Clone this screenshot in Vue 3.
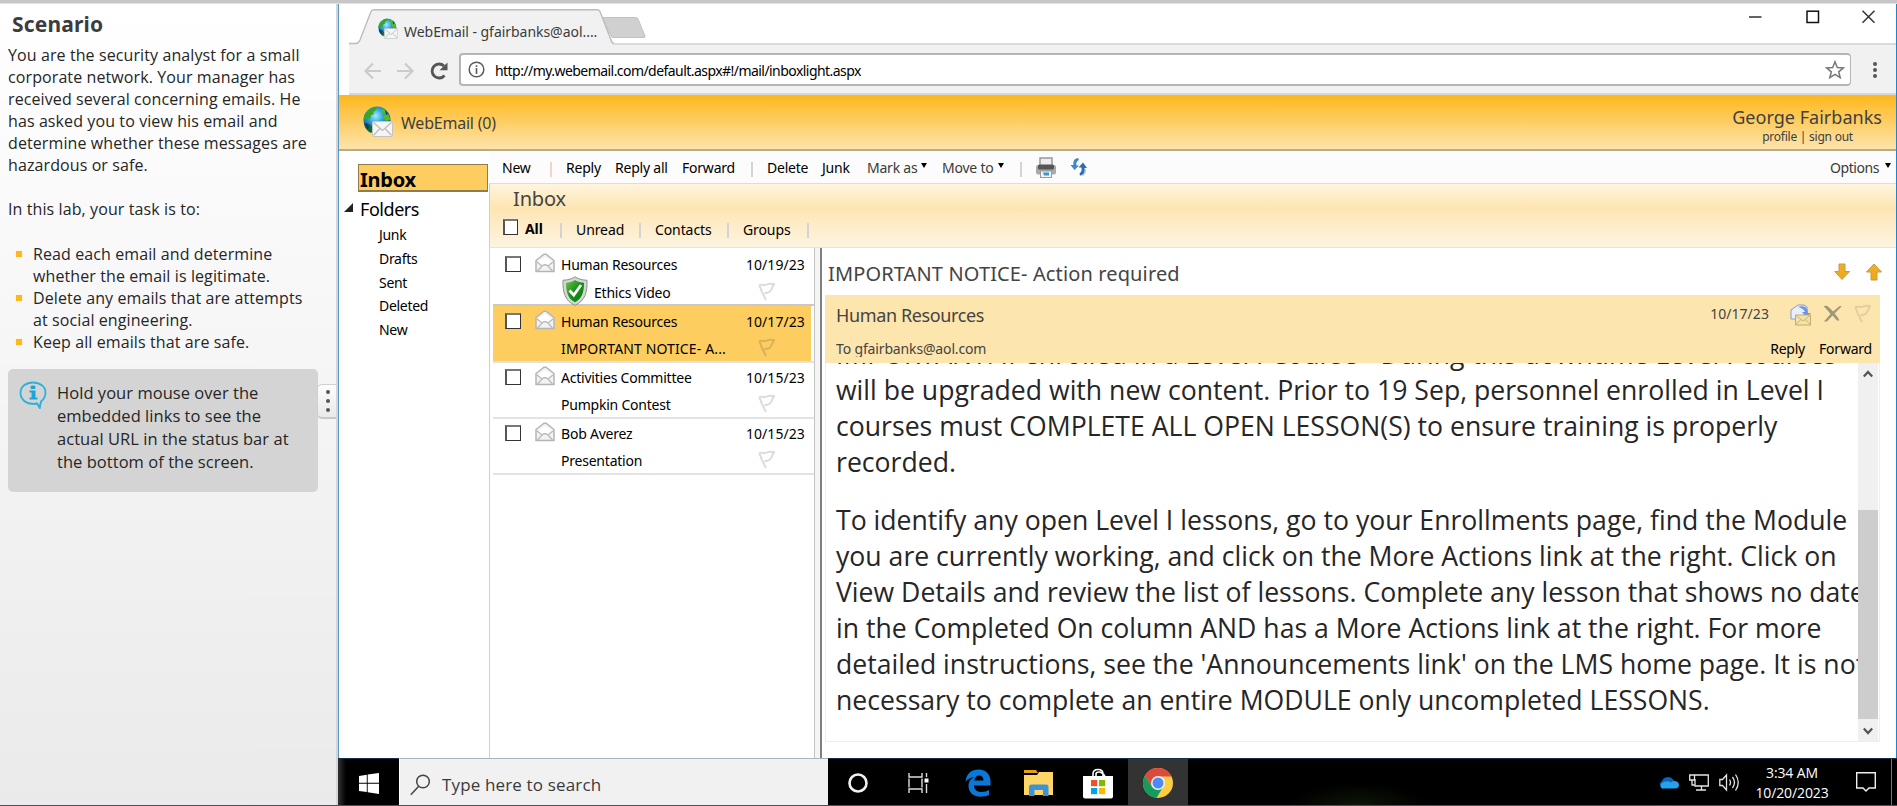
<script setup>
const intro = [
  'You are the security analyst for a small',
  'corporate network. Your manager has',
  'received several concerning emails. He',
  'has asked you to view his email and',
  'determine whether these messages are',
  'hazardous or safe.',
]
const tasks = [
  ['Read each email and determine', 'whether the email is legitimate.'],
  ['Delete any emails that are attempts', 'at social engineering.'],
  ['Keep all emails that are safe.'],
]
const hint = ['Hold your mouse over the', 'embedded links to see the', 'actual URL in the status bar at', 'the bottom of the screen.']
const folders = ['Junk', 'Drafts', 'Sent', 'Deleted', 'New']
const emails = [
  { from: 'Human Resources', subject: 'Ethics Video', date: '10/19/23', safe: true },
  { from: 'Human Resources', subject: 'IMPORTANT NOTICE- A...', date: '10/17/23', selected: true },
  { from: 'Activities Committee', subject: 'Pumpkin Contest', date: '10/15/23' },
  { from: 'Bob Averez', subject: 'Presentation', date: '10/15/23' },
]
const paragraphs = [
  [
    'IMPORTANT: If enrolled in a Level I Course - During this downtime Level I courses',
    'will be upgraded with new content. Prior to 19 Sep, personnel enrolled in Level I',
    'courses must COMPLETE ALL OPEN LESSON(S) to ensure training is properly',
    'recorded.',
  ],
  [
    'To identify any open Level I lessons, go to your Enrollments page, find the Module',
    'you are currently working, and click on the More Actions link at the right. Click on',
    'View Details and review the list of lessons. Complete any lesson that shows no date',
    'in the Completed On column AND has a More Actions link at the right. For more',
    "detailed instructions, see the 'Announcements link' on the LMS home page. It is not",
    'necessary to complete an entire MODULE only uncompleted LESSONS.',
  ],
]
</script>

<template>
  <div class="page">
    <svg class="defs" width="0" height="0">
      <defs>
        <radialGradient id="sea" cx=".45" cy=".35" r=".65">
          <stop offset="0" stop-color="#a5ecfb" /><stop offset=".45" stop-color="#2a9fdc" /><stop offset="1" stop-color="#0c3a86" />
        </radialGradient>
        <linearGradient id="gold" x1="0" y1="0" x2="0" y2="1">
          <stop offset="0" stop-color="#eeb030" /><stop offset="1" stop-color="#f0a814" />
        </linearGradient>
        <linearGradient id="shieldFill" x1="0" y1="0" x2="1" y2="1">
          <stop offset="0" stop-color="#6cc455" /><stop offset=".5" stop-color="#169016" /><stop offset="1" stop-color="#0a7a12" />
        </linearGradient>
        <symbol id="globe" viewBox="0 0 30 31">
          <circle cx="14" cy="14" r="13.5" fill="url(#sea)" />
          <path d="M5 5C9 1 12 1 14 1L13 4 10 6 11 8 8 9 7 13 4 12 1 15C0 11 2 8 5 5Z" fill="#3ca61e" />
          <path d="M1 17l5 1 4 4 -2 5C4 25 1 21 1 17Z" fill="#0c6b35" />
          <path d="M18 2c5 2 9 7 9 12l-4 1-3-4 2-3-4-2Z" fill="#55bd1f" />
          <path d="M2 17l3 1 1 4-2 1ZM22 4l3 4-2 1Z" fill="#16318f" />
          <rect x="9.500" y="15.500" width="20" height="15" rx="1" fill="#f5f5f5" stroke="#c4c4c4" />
          <path d="M10.500 16.500L19.500 24.500 28.500 16.500M10.500 29.500L17 22.500M28.500 29.500L22 22.500" fill="none" stroke="#bdbdbd" stroke-width="1.300" />
        </symbol>
        <symbol id="openmail" viewBox="0 0 20 20">
          <path d="M1 7.500L9 1.200h2L19 7.500V18.500H1Z" fill="#f3f3f3" stroke="#b5b5b5" stroke-width="1.500" />
          <path d="M4 8L10 4l6 4v4H4Z" fill="#fff" />
          <path d="M2 9l5 4M18 9l-5 4M2.500 18l5-5.500q2.500-1.500 5 0l5 5.500" fill="none" stroke="#b9b9b9" stroke-width="1.300" />
        </symbol>
        <symbol id="flag" viewBox="0 0 18 19">
          <path d="M1 3.500C4 1 6 4.500 9 2.500S14 3 16.500 1.500C14 5 14 7 12 9.500 10 11 9 10.500 6.500 11.500M1 3.500C3 5 3 9 5 12L8 18" fill="none" stroke="currentColor" stroke-width="2" />
        </symbol>
      </defs>
    </svg>

    <div class="topstrip"></div>
    <div class="main">
      <aside class="scenario">
        <h1>Scenario</h1>
        <p class="intro"><span v-for="l in intro" :key="l">{{ l }}</span></p>
        <p class="intro lab">In this lab, your task is to:</p>
        <ul>
          <li v-for="t in tasks" :key="t[0]"><span v-for="l in t" :key="l">{{ l }}</span></li>
        </ul>
        <div class="hint">
          <svg width="28" height="28" viewBox="0 0 28 28">
            <path d="M14 1.500C21 1.500 26.500 5.500 26.500 11.500 26.500 16.500 24 19 22 20.500L20.500 26.500 18 22.300C8 24.500 1.500 18.500 1.500 12 1.500 5.500 7 1.500 14 1.500Z" fill="none" stroke="#2fb1dc" stroke-width="1.800" />
            <path d="M4 19C8 23 14 23 18 22.500L21 27 22 21" fill="none" stroke="#2fb1dc" stroke-width="1.300" />
            <rect x="11.500" y="4.500" width="5" height="3.500" rx="1.500" fill="#1aa5d8" />
            <path d="M10.500 9.500h6v7h2v2h-8v-2h2v-5h-2Z" fill="#1aa5d8" />
          </svg>
          <div><span v-for="l in hint" :key="l">{{ l }}</span></div>
        </div>
        <div class="handle"><i></i><i></i><i></i></div>
      </aside>

      <div class="desktop">
        <div class="browser">
          <div class="titlebar">
            <svg class="tabshape" width="300" height="36" viewBox="0 0 300 36">
              <path d="M253 8.500h34q1.500 0 2 1.500l7 17q.5 1.500-1 1.500h-32z" fill="#d0d0d0" stroke="#c2c2c2" />
              <path d="M0 34.500H7C9 34.500 10 33 11 31L22 2.500Q23 .7 25 .7H248Q250 .7 251 2.500L262 31Q263 34.500 265 34.500V36H0Z" fill="#f1f1f1" />
              <path d="M0 34.500H7C9 34.500 10 33 11 31L22 2.500Q23 .7 25 .7H248Q250 .7 251 2.500L262 31Q263 34.500 265 34.500" fill="none" stroke="#bcbcbc" stroke-width="1.400" />
            </svg>
            <svg class="tabicon" width="20" height="21"><use href="#globe" /></svg>
            <span class="tabtext">WebEmail - gfairbanks@aol....</span>
            <svg class="winctl" width="126" height="14" viewBox="0 0 126 14">
              <path d="M0 7h12.500" stroke="#222" stroke-width="1.400" />
              <rect x="58" y="1.200" width="11.500" height="11.300" fill="none" stroke="#111" stroke-width="1.500" />
              <path d="M113.500 .7l12 12M125.500 .7l-12 12" stroke="#333" stroke-width="1.500" />
            </svg>
          </div>
          <div class="navbar">
            <svg class="nav" width="84" height="18" viewBox="0 0 84 18">
              <path d="M17 9H2M9 1.500L1.500 9l7.500 7.500M33 9H48M41 1.500L48.500 9l-7.500 7.500" fill="none" stroke="#cbcbcb" stroke-width="2.200" />
              <path d="M80.500 13.500A7 7 0 1 1 80 4" fill="none" stroke="#555" stroke-width="2.800" />
              <path d="M83.500 .6V8.200H75.500Z" fill="#555" />
            </svg>
            <div class="address">
              <svg width="17" height="17" viewBox="0 0 17 17"><circle cx="8.500" cy="8.500" r="7.300" fill="none" stroke="#5a5a5a" stroke-width="1.500" /><path d="M8.500 4.300v1.600M8.500 7v6" stroke="#5a5a5a" stroke-width="1.600" /></svg>
              <span class="url">http://my.webemail.com/default.aspx#!/mail/inboxlight.aspx</span>
              <svg class="star" width="20" height="20" viewBox="0 0 20 20"><path d="M10 1.800l2.300 5.700 6.100.4-4.700 3.900 1.500 5.900L10 14.400l-5.200 3.300 1.500-5.900L1.600 7.900l6.100-.4Z" fill="none" stroke="#777" stroke-width="1.500" /></svg>
            </div>
            <div class="kebab"><i></i><i></i><i></i></div>
          </div>

          <header class="mailhead">
            <svg width="30" height="31"><use href="#globe" /></svg>
            <span class="brand">WebEmail (0)</span>
            <div class="user"><b>George Fairbanks</b><small>profile | sign out</small></div>
          </header>

          <div class="mail">
            <nav class="side">
              <div class="sel">Inbox</div>
              <div class="folders"><svg width="9" height="9"><path d="M9 0V9H0Z" fill="#222" /></svg>Folders</div>
              <a v-for="f in folders" :key="f">{{ f }}</a>
            </nav>
            <section class="content">
              <div class="menu">
                <span>New</span><i class="pink"></i><span>Reply</span><span>Reply all</span><span>Forward</span><i></i><span>Delete</span><span>Junk</span>
                <span class="dd">Mark as<svg width="6" height="5"><path d="M0 0H6L3 5Z" /></svg></span>
                <span class="dd">Move to<svg width="6" height="5"><path d="M0 0H6L3 5Z" /></svg></span>
                <i></i>
                <svg width="22" height="22" viewBox="0 0 22 22">
                  <rect x="5" y="1" width="12" height="9" fill="#eee" stroke="#999" stroke-width="1.500" />
                  <rect x="1" y="8" width="20" height="9.500" rx="2" fill="#a9a9a9" />
                  <rect x="3" y="7.500" width="16" height="5" rx="1.500" fill="#555" />
                  <rect x="5.500" y="14" width="11" height="6.500" fill="#f4f4f4" stroke="#999" />
                  <path d="M8 15.500h6v3H9Z" fill="#2f9ad0" />
                </svg>
                <svg width="19" height="20" viewBox="0 0 19 20">
                  <path d="M8 1C3.500 2 3 5 3.500 8H.5l4 5L9 8.500H6.500C6 6 6.500 4 9 3Z" fill="#3f86cc" />
                  <path d="M10 18.500c4.500-.5 5-4 4.500-7.500H17L13 5.500 8.500 10.500H11.500c.5 3 0 4.500-2 6Z" fill="#2e6cb5" />
                  <path d="M15.500 12q1 4-3 7" fill="none" stroke="#bbb" />
                </svg>
                <em></em>
                <span class="dd">Options<svg width="6" height="5"><path d="M0 0H6L3 5Z" /></svg></span>
              </div>
              <div class="band">
                <h2>Inbox</h2>
                <div class="filters">
                  <i class="box"></i><b>All</b><u></u><span>Unread</span><u></u><span>Contacts</span><u></u><span>Groups</span><u></u>
                </div>
              </div>
              <div class="panes">
                <div class="list">
                  <div v-for="(m, n) in emails" :key="n" class="row" :class="{ selected: m.selected }">
                    <i class="box"></i>
                    <svg class="env" width="20" height="20"><use href="#openmail" /></svg>
                    <span class="from">{{ m.from }}</span><span class="date">{{ m.date }}</span>
                    <span class="subj" :class="{ wide: m.selected }">
                      <svg v-if="m.safe" class="shield" width="26" height="30" viewBox="0 0 26 30">
                        <path d="M13 .8C9 3.500 5 4.200 1 4.200 .5 16 3 25 13 29.300 23 25 25.500 16 25 4.200 21 4.200 17 3.500 13 .8Z" fill="#d4d7d4" stroke="#8d928d" />
                        <path d="M13 4C10 6 7 6.700 4 6.800 4 16.500 6 22.500 13 26.300 20 22.500 22 16.500 22 6.800 19 6.700 16 6 13 4Z" fill="url(#shieldFill)" />
                        <path d="M7.500 14.500l4.300 4.500L19 9" fill="none" stroke="#fff" stroke-width="2.800" />
                      </svg>{{ m.subject }}</span>
                    <svg class="flag" width="18" height="19"><use href="#flag" /></svg>
                  </div>
                </div>
                <div class="splitter"></div>
                <div class="reader">
                  <div class="subject">
                    <span>IMPORTANT NOTICE- Action required</span>
                    <svg width="48" height="18" viewBox="0 0 48 18">
                      <path d="M5 1h6v7.500h4.500L8 16.500.8 8.500H5Z" fill="url(#gold)" stroke="#c99a3c" />
                      <path d="M37 17h6V9h4.500L40 1 32.500 9H37Z" fill="url(#gold)" stroke="#c99a3c" />
                    </svg>
                  </div>
                  <div class="meta">
                    <div class="sender"><span>Human Resources</span><span class="to">To gfairbanks@aol.com</span></div>
                    <div class="right">
                      <div class="icons">
                        <span>10/17/23</span>
                        <svg class="fw" width="22" height="22" viewBox="0 0 22 22">
                          <path d="M1 6L8 1h6l3 2v12H1Z" fill="#e8eefb" stroke="#8c9cc0" />
                          <path d="M8 3c6-2 10 1 10 6h3l-5 4-4-5h3C14 5 11 4 8 3Z" fill="#6d93e6" />
                          <rect x="5.500" y="11" width="15" height="10" fill="#f3e4a6" stroke="#c2ac70" />
                          <path d="M6 11.500l7 5.500 7-5.500M6 20l5-4.500M20 20l-5-4.500" fill="none" stroke="#c9b478" />
                        </svg>
                        <svg class="del" width="19" height="17" viewBox="0 0 19 17"><path d="M.5 1L4 .8Q8 4 10 6.500L17 .8 18.500 1.500 11.500 8.500Q15 12 16.500 15.500H14L9.500 10.500 4 16.500H1L7.500 9Q4 4.500 .5 1Z" fill="#a0967a" /></svg>
                        <svg class="fl" width="18" height="19"><use href="#flag" /></svg>
                      </div>
                      <div class="acts"><span>Reply</span><span>Forward</span></div>
                    </div>
                  </div>
                  <div class="body">
                    <div class="text">
                      <p v-for="(p, n) in paragraphs" :key="n"><span v-for="l in p" :key="l">{{ l }}</span></p>
                    </div>
                    <div class="scroll">
                      <svg width="10" height="8" viewBox="0 0 10 8"><path d="M.8 6.500L5 2l4.200 4.500" fill="none" stroke="#555" stroke-width="2.300" /></svg>
                      <div class="thumb"></div>
                      <svg width="10" height="8" viewBox="0 0 10 8"><path d="M.8 1.500L5 6l4.200-4.500" fill="none" stroke="#555" stroke-width="2.300" /></svg>
                    </div>
                  </div>
                </div>
              </div>
            </section>
          </div>
        </div>

        <footer class="taskbar">
          <div class="start">
            <svg width="20" height="21" viewBox="0 0 20 21"><path d="M0 3L7.800 1.800V9.800H0ZM8.700 1.600L20 0V9.800H8.700ZM0 10.800H7.800V19L0 18ZM8.700 10.800H20V21L8.700 19.200Z" fill="#fff" /></svg>
          </div>
          <div class="search">
            <svg width="21" height="22" viewBox="0 0 21 22"><circle cx="13" cy="7.500" r="6.300" fill="none" stroke="#444" stroke-width="1.500" /><path d="M8.500 12.500L.8 20.800" stroke="#444" stroke-width="1.500" /></svg>
            <span>Type here to search</span>
          </div>
          <div class="apps">
            <div><svg width="20" height="20" viewBox="0 0 20 20"><circle cx="10" cy="10" r="8.500" fill="none" stroke="#eef2f5" stroke-width="2.600" /></svg></div>
            <div>
              <svg width="21" height="20" viewBox="0 0 21 20"><path d="M1 0V4H14V0M1 20V16H14V20M1 5.500V14.500M14 5.500V14.500M18.500 0V4M18.500 11V20" fill="none" stroke="#ddd" stroke-width="1.400" /><rect x="16.500" y="5.500" width="4" height="4" fill="#fff" /></svg>
            </div>
            <div>
              <svg width="26" height="28" viewBox="0 0 26 28"><path d="M.5 12.500C1.500 4 7 .5 13.500 .5 21.500 .5 25.500 6 25.500 13V16.500H9C9 21 12.500 23 16.500 23 19.500 23 22 22 24 21V26C21.500 27.300 18.500 27.700 15.500 27.700 7.500 27.700 3.500 22.500 3.500 17 3.500 12.500 6 9.500 9.500 8 6.500 8.500 2.500 10 .5 12.500ZM9.300 11.500H18.500C18.500 8.500 17 6.500 14 6.500 11.500 6.500 9.800 8.500 9.300 11.500Z" fill="#0a78d7" fill-rule="evenodd" /></svg>
            </div>
            <div>
              <svg width="29" height="26" viewBox="0 0 29 26"><path d="M0 0H12L14 3H0Z" fill="#e5a00a" /><path d="M0 5H13L15 2H29V25H0Z" fill="#fdd665" /><path d="M5 26V17Q5 14.500 7.500 14.500H22Q24.500 14.500 24.500 17V26H19V20H10.500V26Z" fill="#3c94d8" /></svg>
            </div>
            <div>
              <svg width="30" height="31" viewBox="0 0 30 31"><path d="M10 9V6Q10 1.500 15 1.500T20 6V9M13 8V6Q13 4 16 4T22 8" fill="none" stroke="#fff" stroke-width="1.600" /><path d="M0 8H30V28.500Q30 30.500 28 30.500H2Q0 30.500 0 28.500Z" fill="#fff" /><path d="M8 12h6.200v6.200H8Z" fill="#f05223" /><path d="M16 12h6.200v6.200H16Z" fill="#7fba00" /><path d="M8 20h6.200v6.200H8Z" fill="#00a3ee" /><path d="M16 20h6.200v6.200H16Z" fill="#ffb800" /></svg>
            </div>
            <div class="active">
              <svg width="30" height="30" viewBox="0 0 30 30"><circle cx="15" cy="15" r="15" fill="#fdcd45" /><path d="M15 15L9 18.500 2 7.500A15 15 0 0 0 13.500 30L20 19Z" fill="#159c5a" /><path d="M15 8.500H28.500A15 15 0 0 0 2 7.500L9 18.500 15 15Z" fill="#dc4a3d" /><circle cx="15" cy="15" r="7" fill="#f3f3f3" /><circle cx="15" cy="15" r="5.500" fill="#4c8bf5" /></svg>
            </div>
          </div>
          <div class="tray">
            <svg width="20" height="13" viewBox="0 0 20 13"><path d="M4 12.500A4 4 0 0 1 3 5 6 5 0 0 1 14 3.500L18 8Z" fill="#0a64b8" /><path d="M3 12.500A3.500 3.500 0 0 1 4 6.500Q8 4 12 6.500A4.500 4 0 0 1 20 9 3.500 3.500 0 0 1 17 12.500Z" fill="#25a2ea" /></svg>
            <svg width="20" height="17" viewBox="0 0 20 17"><path d="M6 1H19.300V12H6V5M12.500 12V15.500M7 16H17" fill="none" stroke="#e4e4e4" stroke-width="1.300" /><path d="M.7 1H5.500V6H.7ZM3 6V11H6" fill="none" stroke="#e4e4e4" stroke-width="1.300" /></svg>
            <svg width="21" height="19" viewBox="0 0 21 19"><path d="M.8 6.500H3.500L7.500 2V17L3.500 12.500H.8ZM10.500 6.500q2 3 0 6M13.500 4q4 5.500 0 11M16.500 1.500q5.500 8 0 16" fill="none" stroke="#e4e4e4" stroke-width="1.300" /></svg>
            <div class="clock"><span>3:34 AM</span><span>10/20/2023</span></div>
            <svg width="20" height="20" viewBox="0 0 20 20"><path d="M.7 .7H19.300V16H13L10 19 7 16H.7Z" fill="none" stroke="#eee" stroke-width="1.400" /></svg>
            <i></i>
          </div>
        </footer>
      </div>
    </div>
    <div class="bottomline"></div>
  </div>
</template>

<style>
html, body { overflow: hidden; }
</style>

<style scoped>
.page { width: 1897px; height: 806px; overflow: hidden; display: flex; flex-direction: column; background: #fff; font: 14px/20px "Noto Sans", sans-serif; letter-spacing: -0.22px; color: #000; white-space: nowrap; }
.page * { box-sizing: border-box; }
h1, h2, p, ul { margin: 0; padding: 0; font-weight: 400; }
svg { display: block; flex: none; }
.defs { position: absolute; }
.topstrip { height: 4px; flex: none; background: linear-gradient(#c6c6c6 0 3px, #e2e2e2 3px); }
.main { display: flex; height: 801px; flex: none; }
.bottomline { height: 1px; background: #5d4766; }

.scenario { position: relative; width: 336px; flex: none; padding: 6px 0 0 8px; background: linear-gradient(#fff, #eaeaea); font-family: "Open Sans", sans-serif; font-size: 16px; line-height: 22px; letter-spacing: 0.1px; color: #262626; }
.scenario span { display: block; }
h1 { font: 700 21px/28px "Noto Sans", sans-serif; letter-spacing: 0.15px; color: #3c3c3c; padding-left: 4px; margin-bottom: 6px; }
.lab { margin: 22px 0 23px; }
ul { list-style: none; }
li { position: relative; padding-left: 25px; }
li::before { content: ""; position: absolute; left: 8px; top: 8px; width: 6px; height: 6px; background: #fdb91b; box-shadow: 0 0 1px #fdd98a; }
.hint { display: flex; gap: 10px; width: 310px; height: 123px; margin-top: 16px; padding: 12px 0 0 11px; border-radius: 5px; background: #d4d4d4; font-size: 16.5px; line-height: 23px; letter-spacing: 0.04px; }
.handle { position: absolute; left: 317px; top: 380px; width: 19px; height: 35px; border: 1px solid #d0d0d0; border-bottom: 2px solid #c8c8c8; border-right: 0; border-radius: 5px 0 0 5px; background: linear-gradient(#fdfdfd, #e9e9e9); display: flex; flex-direction: column; align-items: center; justify-content: center; gap: 5px; padding-left: 2px; }
.handle i { width: 4px; height: 4px; border-radius: 50%; background: #555; }

.desktop { flex: 1; min-width: 0; display: flex; flex-direction: column; border-left: 2px solid #d5d5d5; }
.browser { height: 754px; border-left: 1px solid #5b95c2; border-right: 1px solid #1f84cf; background: #fff; display: flex; flex-direction: column; overflow: hidden; }
.titlebar { height: 41px; flex: none; position: relative; display: flex; padding-left: 39px; }
.titlebar::after { content: ""; position: absolute; left: 275px; right: 0; bottom: 0; height: 2px; background: #dadada; }
.tabshape { position: absolute; left: 10px; top: 5px; }
.tabicon { position: relative; margin-top: 14px; }
.tabtext { position: relative; color: #3c3c3c; margin: 18px 0 0 6px; letter-spacing: -0.04px; }
.winctl { margin: 6px 21px 0 auto; }
.navbar { height: 50px; flex: none; margin-left: 10px; background: #f1f1f1; border-bottom: 2px solid #d8d8d8; display: flex; padding: 8px 19px 0 15px; }
.nav { margin: 9px 11px 0 0; }
.address { flex: 1; height: 33px; border: 2px solid #b5b5b5; border-right-width: 1px; border-radius: 4px; background: #fff; display: flex; padding-left: 7px; }
.address > svg { margin-top: 6px; }
.url { margin: 6px 0 0 10px; letter-spacing: -0.55px; }
.address .star { margin: 5px 5px 0 auto; }
.kebab { margin: 9px 0 0 22px; display: flex; flex-direction: column; gap: 2px; }
.kebab i { width: 4px; height: 4px; border-radius: 50%; background: #555; }

.mailhead { height: 56px; flex: none; display: flex; padding-left: 24px; background: linear-gradient(#feb71b, #fde4ac); border-bottom: 2px solid #baa98c; color: #3f3f3f; }
.mailhead > svg { margin-top: 11px; }
.brand { font-size: 16px; line-height: 22px; letter-spacing: -0.22px; margin: 17px 0 0 8px; }
.user { margin-left: auto; padding: 10px 14px 0 0; display: flex; flex-direction: column; }
.user b { font: 400 18px/24px "Noto Sans", sans-serif; letter-spacing: 0.03px; }
.user small { font-size: 12px; line-height: 16px; letter-spacing: -0.24px; margin-left: 30px; }

.mail { flex: 1; display: flex; min-height: 0; }
.side { width: 150px; flex: none; padding: 13px 0 0 4px; }
.sel { width: 130px; height: 28px; margin-left: 15px; border: 1px solid #8f7b4e; border-width: 1px 1px 2px 1px; background: #fecd60; font: 700 20px/27px "Noto Sans", sans-serif; letter-spacing: -0.25px; padding: 1px 0 0 1px; }
.folders { display: flex; align-items: center; font-size: 18px; line-height: 24px; letter-spacing: -0.45px; margin: 5px 0 4px; }
.folders svg { margin: 0 7px 3px 1px; }
.side a { display: block; height: 23.800px; padding-left: 36px; letter-spacing: -0.3px; }
.content { flex: 1; display: flex; flex-direction: column; min-width: 0; }
.menu { height: 32px; flex: none; background: #fcfcfc; display: grid; grid-template-columns: 48px 16px 49px 67px 69px 16px 55px 45px 75px 78px 15px 35px 19px 1fr 66px; padding: 7px 0 0 13px; }
.menu > i, .filters u { width: 2px; height: 15px; background: #d3d3d3; margin-top: 4px; }
.menu > i.pink { background: #f3d3cd; }
.menu > svg { margin-top: -1px; }
.dd { display: flex; color: #3a3a3a; }
.dd svg { margin: 5px 0 0 4px; }
.menu .dd:last-child svg { margin-left: 6px; }
.menu .dd:last-child { letter-spacing: -0.42px; }
.band { height: 65px; flex: none; border-left: 1px solid #cfcfcf; border-top: 1px solid #ddd; border-bottom: 1px solid #e3e3e3; background: linear-gradient(#fff4de, #fde4af 42%, #fde7b9 44%, #fdf4e0); padding: 1px 0 0 13px; }
h2 { font-size: 20px; line-height: 27px; letter-spacing: -0.15px; color: #444; margin-left: 10px; }
.filters { display: grid; grid-template-columns: 22px 35px 16px 63px 16px 72px 16px 64px 2px; margin-top: 8px; letter-spacing: -0.1px; }
.filters b { margin-top: -1px; }
.box { width: 16px; height: 16px; border: 1px solid #333; border-top: 2px solid #777; border-left: 2px solid #555; background: #fff; }
.filters .box { width: 15px; margin-top: -1px; }
.filters u { margin-top: 3px; }
.panes { flex: 1; display: flex; min-height: 0; }
.list { width: 326px; flex: none; border-left: 1px solid #cfcfcf; border-right: 1px solid #c4c4c4; padding: 2px 0 0 3px; }
.row { height: 56px; display: grid; grid-template-columns: 30px 26px 185px 1fr; grid-template-rows: 20px 20px; row-gap: 7px; padding: 5px 0 0 12px; border-bottom: 2px solid #e3e3e3; }
.row.selected { height: 57px; padding-top: 6px; background: linear-gradient(#fecd60, #fecd60) no-repeat; background-size: 318px 100%; }
.row:first-child { border-bottom-color: #c9c9c9; row-gap: 8px; }
.row .box { margin-top: 1px; }
.row .env { margin-top: -2px; }
.date { letter-spacing: 0.05px; }
.subj { grid-column: 3; display: flex; }
.subj.wide { letter-spacing: 0.13px; }
.shield { margin: -7px 6px 0 1px; height: 30px; }
.flag { margin: -1px 0 0 12px; color: #dcdcdc; }
.selected .flag { color: #dab05a; }
.splitter { width: 7px; flex: none; background: #f4f4f4; border-right: 2px solid #808080; }
.reader { flex: 1; min-width: 0; padding: 0 16px 0 3px; }
.subject { display: flex; justify-content: space-between; height: 47px; font-size: 20px; line-height: 27px; letter-spacing: 0.13px; color: #444; padding: 12px 0 0 3px; }
.subject svg { margin-top: 3px; margin-right: -2px; }
.meta { height: 68px; display: flex; justify-content: space-between; background: #fde5ae; border-left: 1px solid #f1e5c5; padding: 0 8px 0 10px; color: #444; }
.sender { display: flex; flex-direction: column; font-size: 18px; line-height: 24px; letter-spacing: -0.37px; padding-top: 8px; }
.to { font-size: 14px; line-height: 20px; letter-spacing: -0.15px; height: 18px; overflow: hidden; margin-top: 12px; }
.right { display: flex; flex-direction: column; align-items: flex-end; }
.icons { display: flex; padding-top: 9px; letter-spacing: 0.05px; height: 43px; }
.fw { margin: 0 0 0 21px; }
.del { margin: 1px 0 0 11px; }
.fl { margin: 0 0 0 12px; color: #e3cf9d; }
.acts { display: flex; gap: 14px; color: #000; margin-top: 1px; }
.body { height: 379px; display: flex; border: 1px solid #eee; border-top: 0; overflow: hidden; }
.text { flex: 1; min-width: 0; overflow: hidden; padding-left: 10px; font: 26.600px/36px "Open Sans", sans-serif; letter-spacing: 0.012px; color: #262626; }
.text p { margin: 0 0 22px; }
.text p:first-child { margin-top: -27px; }
.text span { display: block; }
.scroll { width: 21px; background: linear-gradient(90deg, #f0f0f0 20px, #fff 20px); flex: none; display: flex; flex-direction: column; padding-top: 7px; }
.scroll svg { margin-left: 5px; }
.thumb { margin: 132px 1px 8px 0; height: 209px; background: #cdcdcd; }

.taskbar { height: 47px; display: flex; background: radial-gradient(ellipse 70px 24px at 1020px 48px, #0e1608, transparent), #000; border-top: 1px solid #15304a; }
.start { width: 61px; display: flex; justify-content: center; padding-top: 14px; background: linear-gradient(90deg, #333, #000 8px); }
.search { width: 429px; background: #f1f1f1; border-left: 1px solid #fff; display: flex; padding: 15px 0 0 10px; margin-top: -1px; border-top: 1px solid #a8b4be; }
.search span { font: 17px/24px "Open Sans", sans-serif; letter-spacing: 0.15px; color: #3a3a3a; margin: -1px 0 0 11px; }
.apps { display: flex; }
.apps div { width: 60px; height: 46px; display: flex; align-items: center; justify-content: center; padding-top: 2px; }
.apps .active { background: #333; }
.tray { margin-left: auto; display: flex; align-items: center; }
.tray > svg:nth-child(2), .tray > svg:nth-child(3) { margin-left: 10px; }
.clock { width: 74px; margin: 2px 27px 0 15px; text-align: center; color: #fff; font: 14px/20px "Open Sans", sans-serif; letter-spacing: -0.12px; }
.clock span { display: block; }
.tray i { width: 1px; height: 46px; background: #777; margin: 0 5px 0 15px; }
</style>
